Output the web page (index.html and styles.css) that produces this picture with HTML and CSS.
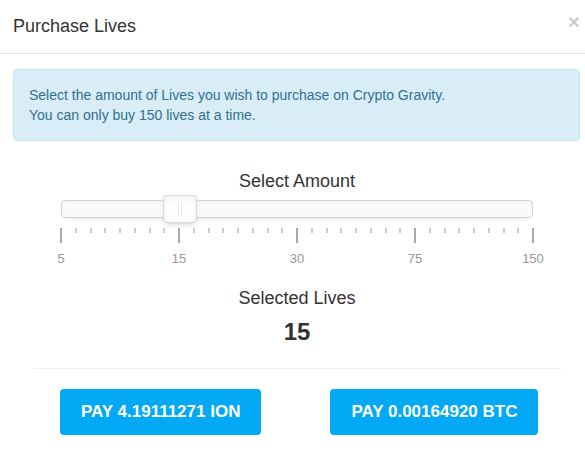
FILE: index.html
```html
<!DOCTYPE html>
<html lang="en">
<head>
<meta charset="utf-8">
<title>Purchase Lives</title>
<link rel="stylesheet" href="styles.css">
</head>
<body>
<div class="modal">
  <div class="modal-header">
    <h4 class="modal-title">Purchase Lives</h4>
    <button class="close" type="button" aria-label="Close">&times;</button>
  </div>
  <div class="modal-body">
    <div class="alert">Select the amount of Lives you wish to purchase on Crypto Gravity.<br>You can only buy 150 lives at a time.</div>
    <div class="picker">
      <h4 class="section-title">Select Amount</h4>
      <div class="slider">
        <div class="track">
          <div class="handle" style="left:25%"></div>
        </div>
        <div class="pips">
          <span class="pip lg"></span><span class="pip"></span><span class="pip"></span><span class="pip"></span><span class="pip"></span><span class="pip"></span><span class="pip"></span><span class="pip"></span>
          <span class="pip lg"></span><span class="pip"></span><span class="pip"></span><span class="pip"></span><span class="pip"></span><span class="pip"></span><span class="pip"></span><span class="pip"></span>
          <span class="pip lg"></span><span class="pip"></span><span class="pip"></span><span class="pip"></span><span class="pip"></span><span class="pip"></span><span class="pip"></span><span class="pip"></span>
          <span class="pip lg"></span><span class="pip"></span><span class="pip"></span><span class="pip"></span><span class="pip"></span><span class="pip"></span><span class="pip"></span><span class="pip"></span>
          <span class="pip lg"></span>
        </div>
        <div class="pip-values">
          <span>5</span><span>15</span><span>30</span><span>75</span><span>150</span>
        </div>
      </div>
      <h4 class="section-title selected-title">Selected Lives</h4>
      <div class="count">15</div>
      <hr class="divider">
      <div class="actions">
        <button class="pay" type="button">PAY 4.19111271 ION</button>
        <button class="pay" type="button">PAY 0.00164920 BTC</button>
      </div>
    </div>
  </div>
</div>
</body>
</html>
```

FILE: styles.css
```css
html, body {
  margin: 0;
  padding: 0;
  overflow: hidden;
  background: #fff;
}

body {
  font-family: "Liberation Sans", Arial, Helvetica, sans-serif;
  font-size: 14px;
  line-height: 20px;
  color: #333;
}

.modal {
  width: 594px;
  background: #fff;
}

.modal-header {
  display: flex;
  justify-content: space-between;
  align-items: flex-start;
  padding: 15px 14px 16px 13px;
  border-bottom: 1px solid #e5e5e5;
}

.modal-title {
  margin: 0;
  font-size: 18px;
  line-height: 22px;
  font-weight: normal;
  color: #333;
}

.close {
  margin: -4px 0 0 0;
  padding: 0;
  border: 0;
  background: transparent;
  font-family: "Liberation Sans", Arial, sans-serif;
  font-size: 21px;
  line-height: 21px;
  font-weight: bold;
  color: #000;
  opacity: 0.2;
  cursor: pointer;
}

.modal-body {
  padding: 15px 14px 15px 13px;
}

.alert {
  padding: 15px;
  background: #d9edf7;
  border: 1px solid #bce8f1;
  border-radius: 4px;
  color: #31708f;
}

.picker {
  padding: 0 19px 0 20px;
}

.section-title {
  margin: 29px 0 0 0;
  font-size: 18px;
  line-height: 22px;
  font-weight: normal;
  text-align: center;
  color: #333;
}

.slider {
  margin: 0 28px;
}

.track {
  position: relative;
  margin-top: 8px;
  height: 18px;
  box-sizing: border-box;
  background: #fafafa;
  border: 1px solid #d3d3d3;
  border-radius: 4px;
  box-shadow: inset 0 1px 1px #f0f0f0, 0 3px 6px -5px #bbb;
}

.handle {
  position: absolute;
  top: -6px;
  width: 34px;
  height: 28px;
  margin-left: -17px;
  box-sizing: border-box;
  background: #fff;
  border: 1px solid #d9d9d9;
  border-radius: 3px;
  box-shadow: inset 0 0 1px #fff, inset 0 1px 7px #ebebeb, 0 3px 6px -3px #bbb;
}

.handle::before,
.handle::after {
  content: "";
  position: absolute;
  top: 6px;
  width: 1px;
  height: 14px;
  background: #e8e7e6;
}

.handle::before {
  left: 14px;
}

.handle::after {
  left: 17px;
}

.pips {
  display: flex;
  justify-content: space-between;
  align-items: flex-start;
  margin: 10px -1px 0 -1px;
  height: 15px;
}

.pip {
  width: 2px;
  height: 5px;
  background: #ccc;
}

.pip.lg {
  height: 15px;
  background: #aaa;
}

.pip-values {
  display: flex;
  justify-content: space-between;
  margin: 8px -20px 0 -20px;
  font-size: 13px;
  line-height: 15px;
  color: #999;
}

.pip-values span {
  width: 40px;
  text-align: center;
}

.selected-title {
  margin-top: 21px;
}

.count {
  margin-top: 10px;
  font-size: 24px;
  line-height: 26px;
  font-weight: bold;
  text-align: center;
  color: #333;
}

.divider {
  margin: 23px 0 0 0;
  border: 0;
  border-top: 1px solid #eee;
  height: 0;
}

.actions {
  display: flex;
  gap: 69px;
  margin-top: 20px;
  padding-left: 27px;
}

.pay {
  height: 46px;
  padding: 0 21px;
  border: 0;
  border-radius: 4px;
  background: #03a9f4;
  color: #fff;
  font-family: "Liberation Sans", Arial, sans-serif;
  font-size: 17px;
  font-weight: bold;
  cursor: pointer;
}
```
